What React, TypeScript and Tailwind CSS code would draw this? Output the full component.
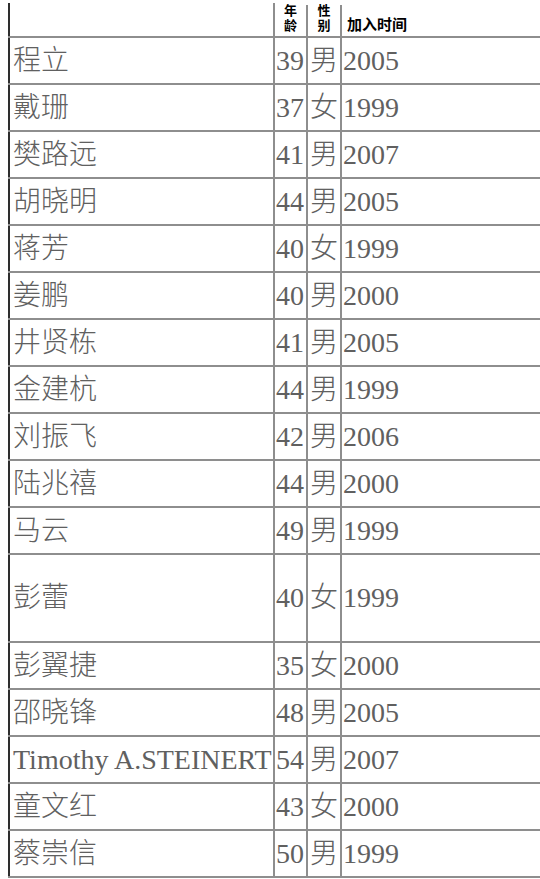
const ROWS: { name: string; age: number; sex: string; year: number; tall?: boolean }[] = [
  { name: '程立', age: 39, sex: '男', year: 2005 },
  { name: '戴珊', age: 37, sex: '女', year: 1999 },
  { name: '樊路远', age: 41, sex: '男', year: 2007 },
  { name: '胡晓明', age: 44, sex: '男', year: 2005 },
  { name: '蒋芳', age: 40, sex: '女', year: 1999 },
  { name: '姜鹏', age: 40, sex: '男', year: 2000 },
  { name: '井贤栋', age: 41, sex: '男', year: 2005 },
  { name: '金建杭', age: 44, sex: '男', year: 1999 },
  { name: '刘振飞', age: 42, sex: '男', year: 2006 },
  { name: '陆兆禧', age: 44, sex: '男', year: 2000 },
  { name: '马云', age: 49, sex: '男', year: 1999 },
  { name: '彭蕾', age: 40, sex: '女', year: 1999, tall: true },
  { name: '彭翼捷', age: 35, sex: '女', year: 2000 },
  { name: '邵晓锋', age: 48, sex: '男', year: 2005 },
  { name: 'Timothy A.STEINERT', age: 54, sex: '男', year: 2007 },
  { name: '童文红', age: 43, sex: '女', year: 2000 },
  { name: '蔡崇信', age: 50, sex: '男', year: 1999 },
]

// stacked two-char header label, one char per line
function Stacked({ top, bottom }: { top: string; bottom: string }) {
  return (
    <div className="flex flex-col items-center">
      <div className="h-[15px]">{top}</div>
      <div className="h-[15px]">{bottom}</div>
    </div>
  )
}

export default function App() {
  return (
    <div className="w-[540px] h-[879px] overflow-hidden bg-white">
      {/* Header */}
      <div className="ml-[8px] h-[38px] flex items-end border-b-2 border-[#8e8e8e] font-['Noto_Sans_CJK_SC',sans-serif] font-bold text-black">
        <div className="w-[267px] h-[33px] border-l-2 border-r-2 border-l-[#2e2e2e] border-r-[#8e8e8e]" />
        <div className="w-[33px] h-[31px] border-r-2 border-[#8e8e8e] flex items-end justify-center pb-[4px] text-[13px] leading-[15px]">
          <Stacked top="年" bottom="龄" />
        </div>
        <div className="w-[34px] h-[31px] border-r-2 border-[#8e8e8e] flex items-end justify-center pb-[4px] text-[13px] leading-[15px]">
          <Stacked top="性" bottom="别" />
        </div>
        <div className="flex-1 h-[31px] flex items-end pl-[5px] pb-[5px] text-[15px] leading-[15px]">
          加入时间
        </div>
      </div>

      {/* Body */}
      {ROWS.map((r) => (
        <div
          key={r.name}
          className={`ml-[8px] flex border-b-2 border-[#8e8e8e] font-['Liberation_Serif','Noto_Sans_CJK_SC',serif] font-light text-[28px] text-[#606060] ${
            r.tall ? 'h-[88px]' : 'h-[47px]'
          }`}
        >
          <div className="w-[267px] border-l-2 border-r-2 border-l-[#2e2e2e] border-r-[#8e8e8e] flex items-center pl-[3px] whitespace-nowrap">
            {r.name}
          </div>
          <div className="w-[33px] border-r-2 border-[#8e8e8e] flex items-center pl-[1px]">{r.age}</div>
          <div className="w-[34px] border-r-2 border-[#8e8e8e] flex items-center justify-center">{r.sex}</div>
          <div className="flex-1 flex items-center pl-[1px]">{r.year}</div>
        </div>
      ))}
    </div>
  )
}
